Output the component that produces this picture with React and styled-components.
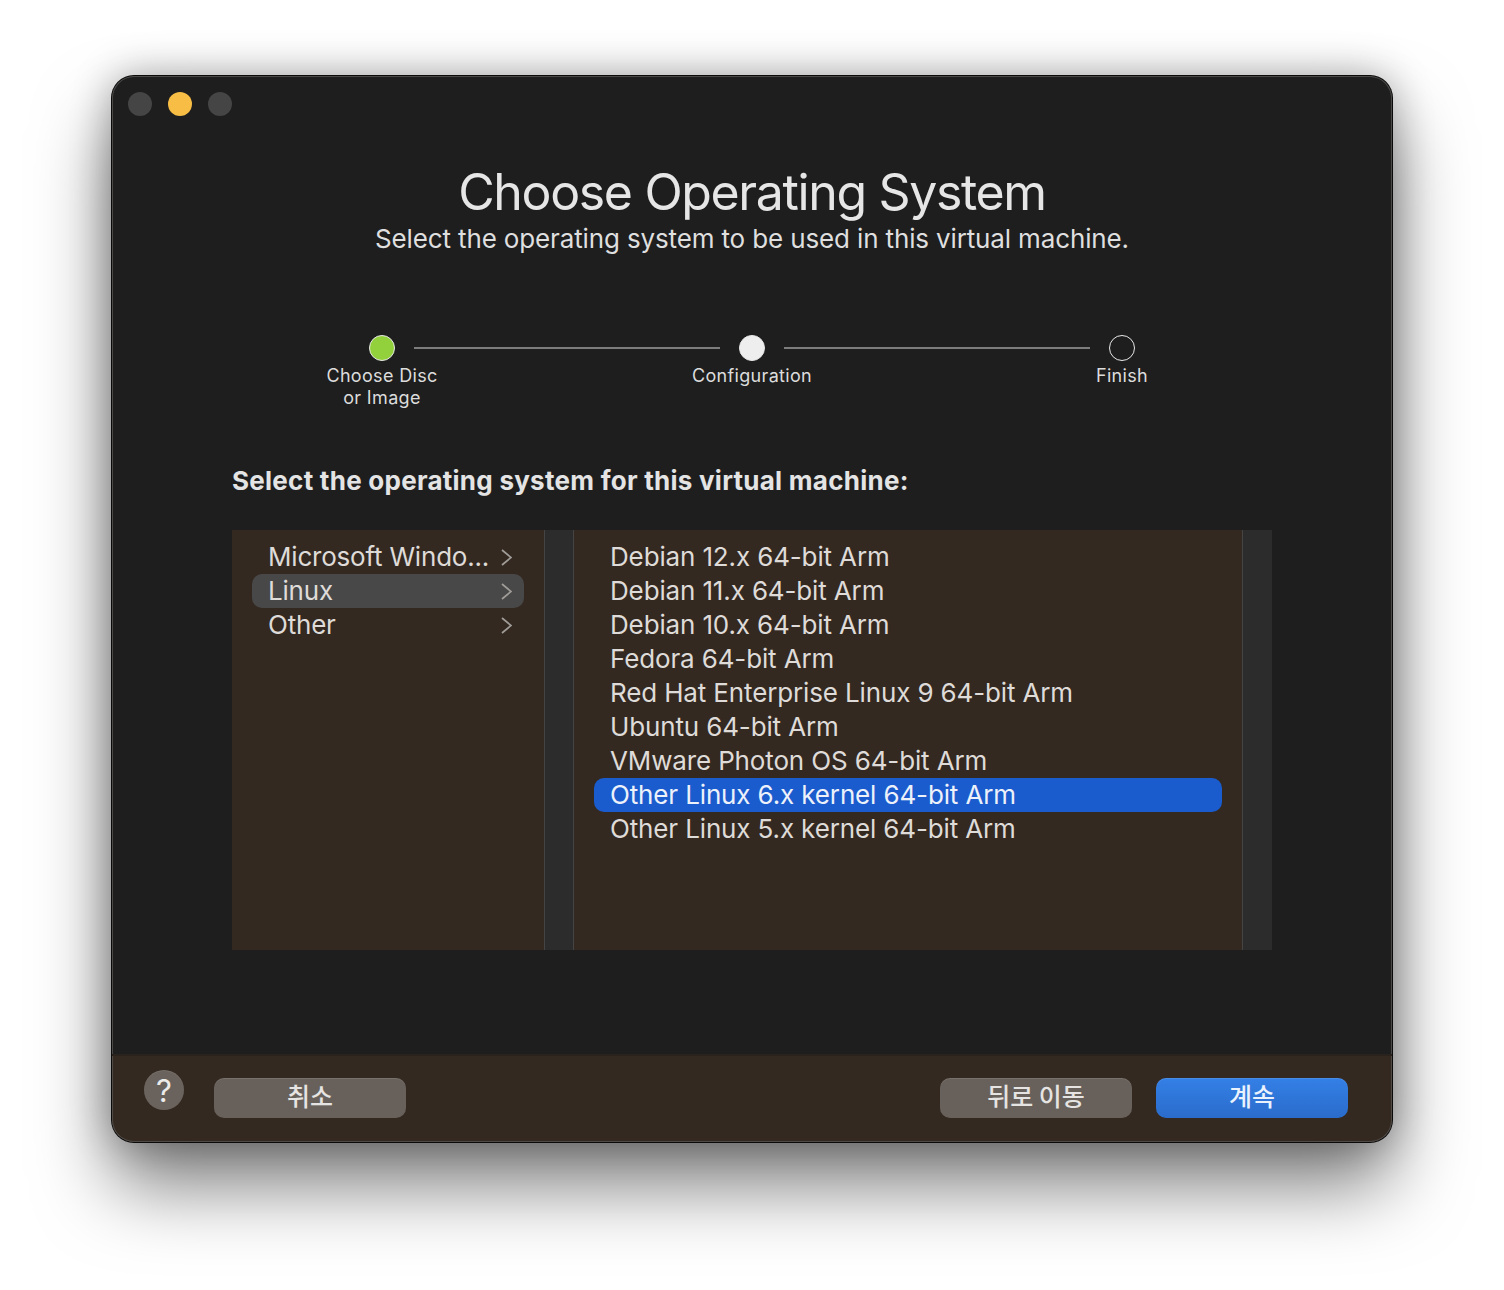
import styled, { createGlobalStyle } from "styled-components";

const systems = [
  "Debian 12.x 64-bit Arm",
  "Debian 11.x 64-bit Arm",
  "Debian 10.x 64-bit Arm",
  "Fedora 64-bit Arm",
  "Red Hat Enterprise Linux 9 64-bit Arm",
  "Ubuntu 64-bit Arm",
  "VMware Photon OS 64-bit Arm",
  "Other Linux 6.x kernel 64-bit Arm",
  "Other Linux 5.x kernel 64-bit Arm",
];

const families = ["Microsoft Windo...", "Linux", "Other"];

function Chevron() {
  return (
    <ChevronIcon viewBox="0 0 11 17" fill="none">
      <path d="M1 1 L10 8.5 L1 16" stroke="currentColor" strokeWidth="1.7" />
    </ChevronIcon>
  );
}

export default function App() {
  return (
    <Page>
      <GlobalStyle />
      <Window>
        <TitleBar>
          <Light />
          <Light $color="#f7bd45" />
          <Light />
        </TitleBar>
        <Content>
          <Title>Choose Operating System</Title>
          <Subtitle>Select the operating system to be used in this virtual machine.</Subtitle>
          <Stepper>
            <Step>
              <Dot $kind="done" />
              <StepLabel>Choose Disc<br />or Image</StepLabel>
            </Step>
            <StepLine />
            <Step>
              <Dot $kind="current" />
              <StepLabel>Configuration</StepLabel>
            </Step>
            <StepLine />
            <Step>
              <Dot />
              <StepLabel>Finish</StepLabel>
            </Step>
          </Stepper>
          <Heading>Select the operating system for this virtual machine:</Heading>
          <Browser>
            <FamilyColumn>
              {families.map((name) => (
                <FamilyRow key={name} $selected={name === "Linux"}>
                  <span>{name}</span>
                  <Chevron />
                </FamilyRow>
              ))}
            </FamilyColumn>
            <Gutter />
            <SystemColumn>
              {systems.map((name) => (
                <SystemRow key={name} $selected={name.startsWith("Other Linux 6")}>
                  {name}
                </SystemRow>
              ))}
            </SystemColumn>
            <Gutter $end />
          </Browser>
        </Content>
        <Footer>
          <HelpButton>?</HelpButton>
          <Button>취소</Button>
          <Spacer />
          <Button>뒤로 이동</Button>
          <Button $primary>계속</Button>
        </Footer>
      </Window>
    </Page>
  );
}

const GlobalStyle = createGlobalStyle`
  html, body {
    margin: 0;
    background: #fff;
    font-family: Inter, "Noto Sans CJK KR", sans-serif;
  }
`;

const Page = styled.div`
  width: 1504px;
  height: 1290px;
  box-sizing: border-box;
  padding: 76px 112px 148px;
  overflow: hidden;
`;

const Window = styled.div`
  width: 1280px;
  height: 1066px;
  box-sizing: border-box;
  display: flex;
  flex-direction: column;
  background: #1e1e1e;
  border-radius: 22px;
  overflow: hidden;
  box-shadow:
    0 0 0 1px #0a0a0a,
    inset 0 0 0 1px #4c4a48,
    0 44px 76px rgba(0, 0, 0, 0.5),
    0 0 40px rgba(0, 0, 0, 0.32);
`;

const TitleBar = styled.div`
  display: flex;
  gap: 16px;
  padding: 16px 16px 0;
  height: 40px;
`;

const Light = styled.div`
  width: 24px;
  height: 24px;
  border-radius: 50%;
  background: ${(p) => p.$color || "#454545"};
`;

const Content = styled.div`
  flex: 1;
  display: flex;
  flex-direction: column;
  align-items: center;
`;

const Title = styled.h1`
  margin: 24px 0 0;
  height: 72px;
  line-height: 72px;
  font-size: 50px;
  font-weight: 400;
  letter-spacing: -1.35px;
  color: #e6e6e6;
`;

const Subtitle = styled.p`
  margin: -6px 0 0;
  height: 34px;
  line-height: 34px;
  font-size: 26px;
  font-weight: 400;
  letter-spacing: -0.14px;
  color: #dfdfdf;
`;

const Stepper = styled.div`
  margin-top: 79px;
  width: 1000px;
  display: flex;
  justify-content: center;
  height: 129px;
`;

const Step = styled.div`
  width: 64px;
  display: flex;
  flex-direction: column;
  align-items: center;
`;

const Dot = styled.div`
  width: 26px;
  height: 26px;
  box-sizing: border-box;
  border-radius: 50%;
  border: 1px solid #e8e8e8;
  background: ${(p) =>
    p.$kind === "done" ? "#92d13c" : p.$kind === "current" ? "#eeeeee" : "transparent"};
`;

const StepLabel = styled.div`
  margin-top: 4px;
  font-size: 18px;
  line-height: 22px;
  letter-spacing: 0.33px;
  text-align: center;
  white-space: nowrap;
  color: #dcdcdc;
`;

const StepLine = styled.div`
  width: 306px;
  height: 2px;
  margin-top: 12px;
  background: #7c7c7c;
`;

const Heading = styled.h2`
  align-self: flex-start;
  margin: 0 0 0 120px;
  height: 34px;
  line-height: 34px;
  font-size: 26px;
  font-weight: 700;
  letter-spacing: 0.26px;
  color: #e4e4e4;
`;

const Browser = styled.div`
  margin-top: 32px;
  width: 1040px;
  height: 420px;
  display: flex;
  background: #342921;
`;

const FamilyColumn = styled.div`
  width: 312px;
  box-sizing: border-box;
  padding: 10px 20px;
`;

const FamilyRow = styled.div`
  height: 34px;
  line-height: 34px;
  box-sizing: border-box;
  display: flex;
  align-items: center;
  justify-content: space-between;
  padding: 0 12px 0 16px;
  border-radius: 10px;
  font-size: 26px;
  letter-spacing: -0.2px;
  color: #dedbd8;
  background: ${(p) => (p.$selected ? "#484848" : "transparent")};
`;

const ChevronIcon = styled.svg`
  width: 11px;
  height: 17px;
  color: #a09c98;
`;

const Gutter = styled.div`
  width: 30px;
  box-sizing: border-box;
  background: #2c2c2c;
  border-left: 1px solid #444;
  border-right: ${(p) => (p.$end ? "none" : "1px solid #444")};
`;

const SystemColumn = styled.div`
  flex: 1;
  padding: 10px 20px;
`;

const SystemRow = styled.div`
  height: 34px;
  line-height: 34px;
  padding-left: 16px;
  border-radius: 10px;
  font-size: 26px;
  letter-spacing: -0.14px;
  white-space: nowrap;
  color: ${(p) => (p.$selected ? "#ecf1fa" : "#dedbd8")};
  background: ${(p) => (p.$selected ? "#1a5ccd" : "transparent")};
`;

const Footer = styled.div`
  height: 88px;
  box-sizing: border-box;
  display: flex;
  align-items: flex-start;
  gap: 24px;
  padding: 22px 44px 0 32px;
  background: #342921;
  border-top: 2px solid #2a221c;
  border-radius: 0 0 22px 22px;
  box-shadow:
    inset 1px 0 0 #4f4a45,
    inset -1px 0 0 #4f4a45,
    inset 0 -1px 0 #4f4a45;
`;

const HelpButton = styled.div`
  width: 40px;
  height: 40px;
  margin-top: -8px;
  margin-right: 6px;
  border-radius: 50%;
  display: flex;
  align-items: center;
  justify-content: center;
  font-size: 31px;
  color: #ecebea;
  background: #6a635d;
  box-shadow: inset 0 1px 0 rgba(255, 255, 255, 0.08);
`;

const Button = styled.div`
  width: 192px;
  height: 40px;
  box-sizing: border-box;
  padding-bottom: 6px;
  border-radius: 10px;
  display: flex;
  align-items: center;
  justify-content: center;
  font-family: "Noto Sans CJK KR", sans-serif;
  font-size: 25px;
  font-weight: 500;
  color: ${(p) => (p.$primary ? "#eaf2fd" : "#e6e4e2")};
  background: ${(p) => (p.$primary ? "linear-gradient(#3480e6, #2a6ccb)" : "#68615b")};
  box-shadow: inset 0 1px 0 rgba(255, 255, 255, 0.1);
`;

const Spacer = styled.div`
  flex: 1;
  margin-right: -16px;
`;
